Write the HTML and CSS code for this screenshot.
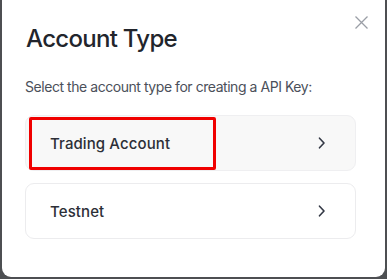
FILE: index.html
```html
<!DOCTYPE html>
<html>
<head>
<meta charset="utf-8">
<link rel="stylesheet" href="styles.css">
</head>
<body>
<div class="modal">
  <button class="close" aria-label="Close">
    <svg width="13" height="13" viewBox="0 0 13 13"><path d="M0.5 0.5L12.5 12.5M12.5 0.5L0.5 12.5" stroke="#9a9ea6" stroke-width="1.3" fill="none"/></svg>
  </button>
  <h1 class="title">Account Type</h1>
  <p class="subtitle">Select the account type for creating a API Key:</p>
  <div class="options">
    <div class="option option-active">
      <span class="label">Trading Account</span>
      <svg class="chev" width="8" height="12" viewBox="0 0 8 12"><path d="M1.5 1.2L6 6L1.5 10.8" stroke="#333845" stroke-width="1.6" fill="none" stroke-linecap="round" stroke-linejoin="round"/></svg>
      <div class="highlight"></div>
    </div>
    <div class="option">
      <span class="label">Testnet</span>
      <svg class="chev" width="8" height="12" viewBox="0 0 8 12"><path d="M1.5 1.2L6 6L1.5 10.8" stroke="#333845" stroke-width="1.6" fill="none" stroke-linecap="round" stroke-linejoin="round"/></svg>
    </div>
  </div>
</div>
</body>
</html>
```
FILE: styles.css
```css
html, body {
  margin: 0;
  padding: 0;
  background: #4d4f52;
  height: 279px;
  overflow: hidden;
}
.modal {
  position: relative;
  margin-left: 2px;
  width: 383px;
  height: 277px;
  background: #ffffff;
  border-radius: 0 0 9px 9px;
  box-sizing: border-box;
  padding: 23px 29px 0 24px;
  font-family: Inter, "Noto Sans", sans-serif;
}
.close {
  position: absolute;
  top: 16px;
  left: 353px;
  padding: 0;
  border: 0;
  background: none;
  width: 13px;
  height: 13px;
  display: block;
}
.close svg { display: block; }
.title {
  margin: 0;
  font-size: 24px;
  line-height: 32px;
  font-weight: 500;
  color: #22252c;
  letter-spacing: -0.7px;
}
.subtitle {
  margin: 22px 0 0 -1px;
  font-size: 14px;
  line-height: 20px;
  color: #4b505a;
  letter-spacing: -0.45px;
}
.options {
  margin: 18px 0 0 -1px;
  display: flex;
  flex-direction: column;
  gap: 12px;
}
.option {
  position: relative;
  height: 56px;
  box-sizing: border-box;
  border: 1px solid #ececee;
  border-radius: 9px;
  background: #ffffff;
  display: flex;
  align-items: center;
  justify-content: space-between;
  padding: 0 29px 0 24px;
}
.option-active {
  background: #f8f8f8;
  border-color: #efeff1;
}
.label {
  font-size: 15px;
  font-weight: 500;
  color: #2c2f37;
  letter-spacing: 0.1px;
}
.chev { display: block; }
.highlight {
  position: absolute;
  left: 3px;
  top: 1px;
  width: 187px;
  height: 53px;
  box-sizing: border-box;
  border: 3px solid #f00000;
  border-radius: 2px;
}
```
